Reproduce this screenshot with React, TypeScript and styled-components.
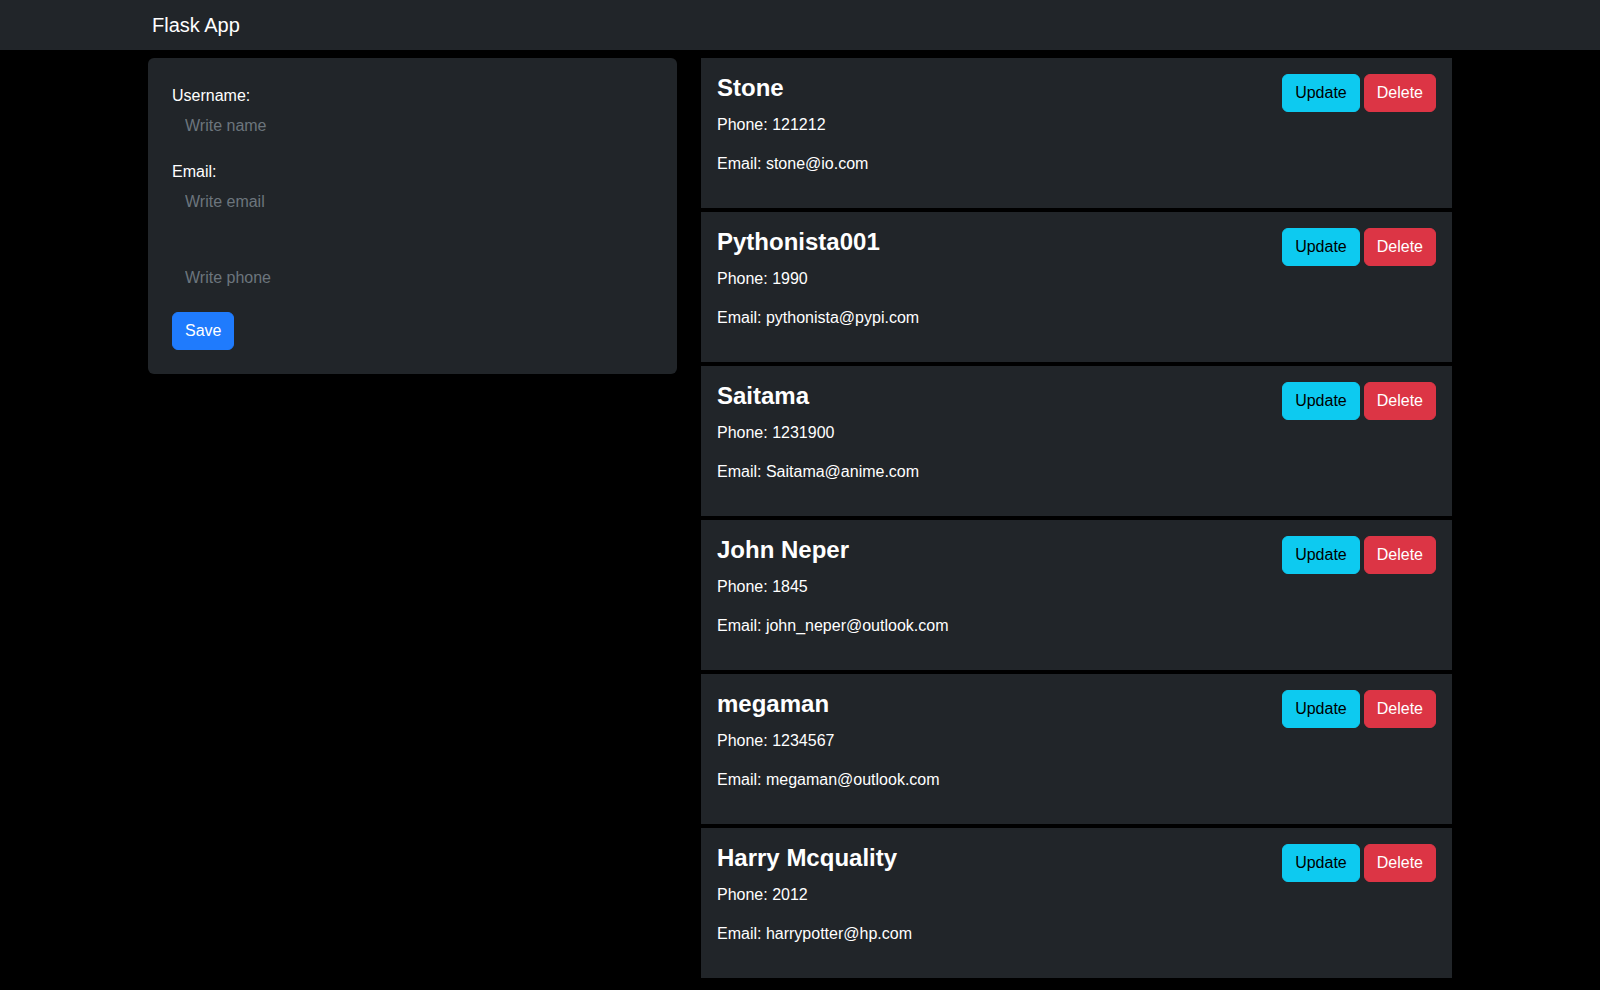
import React from "react";
import styled, { createGlobalStyle } from "styled-components";

const GlobalStyle = createGlobalStyle`
  * { box-sizing: border-box; }
  html, body {
    margin: 0;
    padding: 0;
    background: #000;
    color: #fff;
    font-family: "Liberation Sans", Arial, sans-serif;
    font-size: 16px;
    line-height: 1.5;
  }
`;

const Navbar = styled.nav`
  height: 50px;
  background: #212529;
  display: flex;
  align-items: center;
`;

const NavInner = styled.div`
  width: 1320px;
  margin: 0 auto;
  padding: 0 12px;
`;

const Brand = styled.a`
  color: #fff;
  font-size: 20px;
  line-height: 30px;
  text-decoration: none;
  display: inline-block;
`;

const Main = styled.main`
  width: 1304px;
  margin: 8px auto 0;
  display: grid;
  grid-template-columns: 529px 751px;
  column-gap: 24px;
  align-items: start;
`;

const FormPanel = styled.form`
  background: #212529;
  border-radius: 6px;
  padding: 27px 24px 24px;
  display: flex;
  flex-direction: column;
`;

const Group = styled.div`
  display: flex;
  flex-direction: column;
  margin-bottom: 16px;
`;

const Label = styled.label`
  display: block;
  height: 22px;
  line-height: 22px;
  font-size: 16px;
  color: #fff;
`;

const Input = styled.input`
  display: block;
  width: 100%;
  height: 38px;
  padding: 6px 12px;
  border: 1px solid transparent;
  background: transparent;
  color: #fff;
  font-family: inherit;
  font-size: 16px;
  line-height: 24px;
  outline: none;
  &::placeholder {
    color: #6c757d;
  }
`;

type Variant = "primary" | "info" | "danger";

const variantColors: Record<Variant, { bg: string; fg: string }> = {
  primary: { bg: "#1f7bfd", fg: "#fff" },
  info: { bg: "#0dcaf0", fg: "#000" },
  danger: { bg: "#dc3545", fg: "#fff" },
};

const Button = styled.button<{ $variant: Variant }>`
  display: inline-block;
  height: 38px;
  padding: 6px 12px;
  border: 1px solid ${(p) => variantColors[p.$variant].bg};
  border-radius: 6px;
  background: ${(p) => variantColors[p.$variant].bg};
  color: ${(p) => variantColors[p.$variant].fg};
  font-family: inherit;
  font-size: 16px;
  line-height: 24px;
  cursor: pointer;
`;

const SaveButton = styled(Button)`
  align-self: flex-start;
  margin-top: -1px;
`;

const CardList = styled.div`
  display: flex;
  flex-direction: column;
  gap: 4px;
`;

const Card = styled.div`
  background: #212529;
  padding: 16px;
  display: flex;
  justify-content: space-between;
  align-items: flex-start;
`;

const CardInfo = styled.div`
  display: flex;
  flex-direction: column;
`;

const CardTitle = styled.h4`
  margin: 0 0 11px;
  font-size: 24px;
  font-weight: 700;
  line-height: 28px;
  color: #fff;
`;

const CardText = styled.p<{ $gap: number }>`
  margin: 0 0 ${(p) => p.$gap}px;
  line-height: 24px;
  color: #fff;
`;

const Actions = styled.div`
  display: flex;
  gap: 4px;
`;

const users = [
  { name: "Stone", phone: "121212", email: "stone@io.com" },
  { name: "Pythonista001", phone: "1990", email: "pythonista@pypi.com" },
  { name: "Saitama", phone: "1231900", email: "Saitama@anime.com" },
  { name: "John Neper", phone: "1845", email: "john_neper@outlook.com" },
  { name: "megaman", phone: "1234567", email: "megaman@outlook.com" },
  { name: "Harry Mcquality", phone: "2012", email: "harrypotter@hp.com" },
];

export default function App() {
  return (
    <>
      <GlobalStyle />
      <Navbar>
        <NavInner>
          <Brand href="#">Flask App</Brand>
        </NavInner>
      </Navbar>
      <Main>
        <FormPanel onSubmit={(e) => e.preventDefault()}>
          <Group>
            <Label htmlFor="username">Username:</Label>
            <Input id="username" placeholder="Write name" />
          </Group>
          <Group>
            <Label htmlFor="email">Email:</Label>
            <Input id="email" placeholder="Write email" />
          </Group>
          <Group>
            <Label htmlFor="phone"></Label>
            <Input id="phone" placeholder="Write phone" />
          </Group>
          <SaveButton $variant="primary" type="submit">
            Save
          </SaveButton>
        </FormPanel>
        <CardList>
          {users.map((u) => (
            <Card key={u.name}>
              <CardInfo>
                <CardTitle>{u.name}</CardTitle>
                <CardText $gap={15}>Phone: {u.phone}</CardText>
                <CardText $gap={16}>Email: {u.email}</CardText>
              </CardInfo>
              <Actions>
                <Button $variant="info">Update</Button>
                <Button $variant="danger">Delete</Button>
              </Actions>
            </Card>
          ))}
        </CardList>
      </Main>
    </>
  );
}
